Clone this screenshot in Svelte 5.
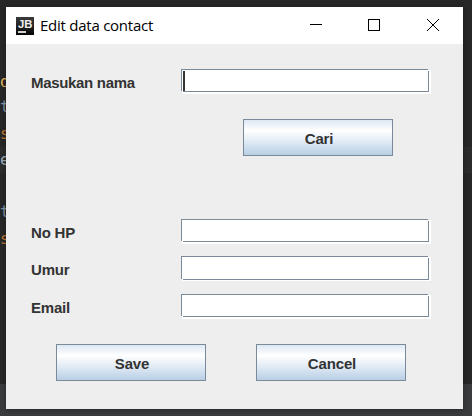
<script>
  const contactFields = [
    { label: 'No HP' },
    { label: 'Umur', tall: true },
    { label: 'Email' }
  ];
  const codeLines = [
    { text: 'd', color: '#e0b15c', top: 71 },
    { text: 't', color: '#8094a5', top: 96 },
    { text: 's', color: '#bb7536', top: 123 },
    { text: 'e', color: '#9daab6', top: 149 },
    { text: 't', color: '#8094a5', top: 201 },
    { text: 's', color: '#bb7536', top: 228 }
  ];
  let name = $state('');
  let values = $state(['', '', '']);
</script>

<div class="desktop">
  <div class="line-highlight"></div>
  <div class="statusbar"></div>
  {#each codeLines as line}
    <span class="code" style="top:{line.top}px;color:{line.color}">{line.text}</span>
  {/each}

  <section class="window">
    <header>
      <svg class="logo" width="18" height="18" viewBox="0 0 18 18">
        <defs>
          <linearGradient id="logo-bg" x1="0" y1="0" x2="0" y2="1">
            <stop offset="0" stop-color="#3b3b3b" />
            <stop offset=".55" stop-color="#202020" />
            <stop offset="1" stop-color="#050505" />
          </linearGradient>
        </defs>
        <rect width="18" height="18" fill="url(#logo-bg)" />
        <text x="2" y="10.5" textLength="14.5" lengthAdjust="spacingAndGlyphs">JB</text>
        <rect x="2" y="14" width="8" height="2" fill="#d2d2d2" />
      </svg>
      <h1>Edit data contact</h1>
      <div class="controls">
        <svg width="12" height="12" shape-rendering="crispEdges"><path d="M0 5.5h12" /></svg>
        <svg width="12" height="12" shape-rendering="crispEdges"><path d="M.5 .5h11v11h-11z" /></svg>
        <svg width="12" height="12"><path d="M0 0l12 12M12 0l-12 12" /></svg>
      </div>
    </header>

    <main>
      <label class="row">
        <span>Masukan nama</span>
        <span class="field"><input bind:value={name} /><i class="caret"></i></span>
      </label>
      <button class="search">Cari</button>
      <div class="fields">
        {#each contactFields as { label, tall }, i}
          <label class="row">
            <span class="short">{label}</span>
            <span class="field" class:tall><input bind:value={values[i]} /></span>
          </label>
        {/each}
      </div>
      <div class="actions">
        <button>Save</button>
        <button>Cancel</button>
      </div>
    </main>
  </section>
</div>

<style>
  :global(body) { overflow: hidden; }
  .desktop {
    position: relative;
    box-sizing: border-box;
    width: 472px;
    height: 416px;
    padding: 7px 0 0 6px;
    background: #272727;
    overflow: hidden;
  }
  .line-highlight {
    position: absolute;
    left: 0;
    top: 147px;
    width: 100%;
    height: 26px;
    background: #2c2c2c;
  }
  .statusbar {
    position: absolute;
    left: 0;
    top: 384px;
    width: 100%;
    height: 32px;
    background: #393b3d;
  }
  .code {
    position: absolute;
    left: 0;
    font: 16px/22px "DejaVu Sans Mono", monospace;
  }
  .window {
    position: relative;
    width: 457px;
    height: 402px;
    background: #eee;
    font-family: "Liberation Sans", Arial, sans-serif;
    box-shadow: 0 1px 5px rgba(0, 0, 0, .35);
  }
  header {
    display: flex;
    align-items: center;
    box-sizing: border-box;
    height: 37px;
    padding: 0 24px 0 10px;
    background: #fff;
  }
  .logo text {
    fill: #f0f0f0;
    font: bold 11.5px "Liberation Sans", Arial, sans-serif;
  }
  h1 {
    margin: 0 0 0 6px;
    padding-bottom: 2px;
    font: 15px/20px "Open Sans", "Noto Sans", sans-serif;
    letter-spacing: -.25px;
    color: #000;
    white-space: nowrap;
  }
  .controls {
    display: flex;
    gap: 46px;
    margin-left: auto;
    padding-bottom: 1px;
  }
  .controls svg { display: block; }
  .controls svg:last-child { margin-left: 1px; }
  .controls path { fill: none; stroke: #000; }
  main { padding: 25px 32px 0 25px; }
  .row {
    display: flex;
    justify-content: space-between;
    height: 25px;
    font-size: 15px;
    font-weight: bold;
    line-height: 28px;
    letter-spacing: -.32px;
    color: #333;
  }
  .short { letter-spacing: -.2px; }
  .field {
    --base: 22px;
    position: relative;
    display: block;
    box-sizing: border-box;
    width: 250px;
    height: 25px;
    background:
      linear-gradient(#7a8a99, #7a8a99) 0 0 / 247px 1px no-repeat,
      linear-gradient(#7a8a99, #7a8a99) 0 0 / 1px var(--base) no-repeat,
      linear-gradient(#7a8a99, #7a8a99) 2px var(--base) / 246px 1px no-repeat,
      linear-gradient(#7a8a99, #7a8a99) 247px 2px / 1px calc(var(--base) - 1px) no-repeat,
      linear-gradient(#fff, #fff) 1px 1px / 249px 24px no-repeat;
  }
  .field.tall { --base: 23px; }
  input {
    position: relative;
    display: block;
    box-sizing: border-box;
    width: 244px;
    height: 20px;
    margin: 2px;
    padding: 0 2px;
    border: 0;
    outline: 0;
    background: transparent;
    font: 15px "Liberation Sans", Arial, sans-serif;
  }
  .caret {
    position: absolute;
    left: 2px;
    top: 2px;
    width: 2px;
    height: 20px;
    background: #333;
  }
  button {
    display: block;
    width: 150px;
    height: 37px;
    padding: 2px 0 0 2px;
    border: 1px solid #7a8a99;
    border-radius: 0;
    background: linear-gradient(#dde8f3 0%, #fff 30%, #dde8f3 65%, #b8cfe5 100%);
    font: bold 15px "Liberation Sans", Arial, sans-serif;
    letter-spacing: -.15px;
    color: #333;
  }
  .search { margin: 25px 0 0 212px; }
  .fields {
    display: flex;
    flex-direction: column;
    gap: 12px;
    margin-top: 63px;
  }
  .row:last-child { margin-top: 1px; }
  .actions {
    display: flex;
    gap: 50px;
    margin: 25px 0 0 25px;
  }
</style>
